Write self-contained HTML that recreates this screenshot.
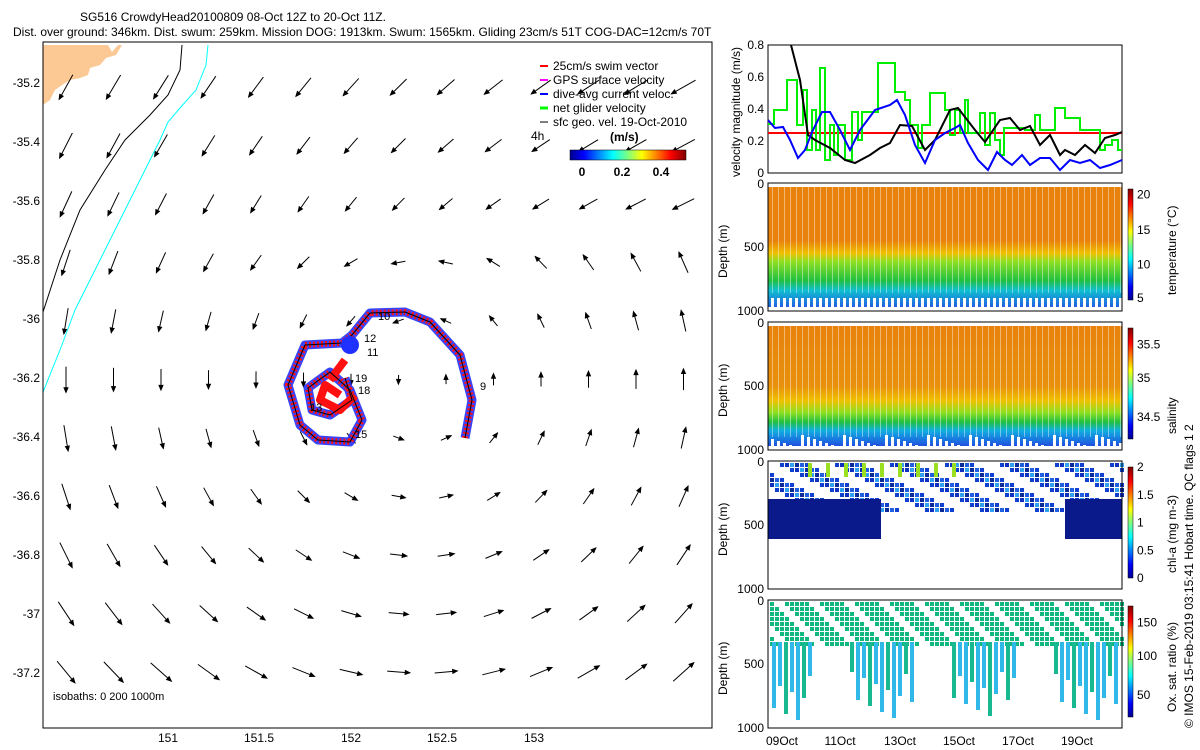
<!DOCTYPE html>
<html><head><meta charset="utf-8"><style>
html,body{margin:0;padding:0;background:#fff;width:1200px;height:750px;overflow:hidden}
svg{display:block;font-family:"Liberation Sans",sans-serif}
</style></head><body>
<svg id="s" width="1200" height="750" viewBox="0 0 1200 750" xmlns="http://www.w3.org/2000/svg">
<defs>
<linearGradient id="jet" x1="0" x2="1" y1="0" y2="0">
<stop offset="0" stop-color="#00008f"/><stop offset="0.12" stop-color="#0000ff"/><stop offset="0.37" stop-color="#00ffff"/><stop offset="0.5" stop-color="#7fff7f"/><stop offset="0.62" stop-color="#ffff00"/><stop offset="0.87" stop-color="#ff0000"/><stop offset="1" stop-color="#800000"/>
</linearGradient>
<linearGradient id="jetv" x1="0" x2="0" y1="1" y2="0">
<stop offset="0" stop-color="#00008f"/><stop offset="0.12" stop-color="#0000ff"/><stop offset="0.37" stop-color="#00ffff"/><stop offset="0.5" stop-color="#7fff7f"/><stop offset="0.62" stop-color="#ffff00"/><stop offset="0.87" stop-color="#ff0000"/><stop offset="1" stop-color="#800000"/>
</linearGradient>
<linearGradient id="tg" x1="0" x2="0" y1="0" y2="1">
<stop offset="0" stop-color="#e8820c"/><stop offset="0.45" stop-color="#e8820c"/><stop offset="0.55" stop-color="#f0c000"/><stop offset="0.62" stop-color="#90e020"/><stop offset="0.78" stop-color="#20c040"/><stop offset="0.86" stop-color="#10c0d0"/><stop offset="1" stop-color="#2060e0"/>
</linearGradient>
<linearGradient id="sg" x1="0" x2="0" y1="0" y2="1">
<stop offset="0" stop-color="#e8820c"/><stop offset="0.5" stop-color="#e8900c"/><stop offset="0.62" stop-color="#f0c000"/><stop offset="0.72" stop-color="#90e020"/><stop offset="0.8" stop-color="#20c040"/><stop offset="0.87" stop-color="#10b0e0"/><stop offset="1" stop-color="#2050e0"/>
</linearGradient>
</defs>
<g font-size="12" fill="#000">
<text x="80" y="21">SG516 CrowdyHead20100809 08-Oct 12Z to 20-Oct 11Z.</text>
<text x="13" y="36">Dist. over ground: 346km. Dist. swum: 259km. Mission DOG: 1913km. Swum: 1565km. Gliding 23cm/s 51T COG-DAC=12cm/s 70T</text>
</g>
<!-- map -->
<path d="M43,45 L108,45 L112,52 L118,45 L122,45 L116,55 L106,58 L100,65 L90,68 L88,75 L80,78 L70,80 L62,85 L55,90 L50,100 L43,105 Z" fill="#fcc994"/>
<path d="M182,45 L180,70 L168,95 L150,115 L125,140 L105,170 L80,210 L60,260 L43,312" fill="none" stroke="#000" stroke-width="1"/>
<path d="M208,45 L206,65 L196,90 L180,108 L168,122 L160,140 L150,160 L125,210 L100,260 L75,310 L60,350 L43,392" fill="none" stroke="#0ff" stroke-width="1"/>
<g id="arrows" stroke="#000" fill="#000" stroke-width="1"></g>
<g fill="none" stroke-linejoin="round">
<path id="trk" d="M465,438 L472,400 L460,355 L430,322 L405,312 L370,313 L352,335 L342,343 L305,345 L288,385 L300,425 L318,440 L350,442 L362,420 L350,390 L330,372 L308,388 L312,410 L330,415 L352,400 L345,378" stroke="#2030ff" stroke-width="9" opacity="0.9"/>
<path d="M465,438 L472,400 L460,355 L430,322 L405,312 L370,313 L352,335 L342,343 L305,345 L288,385 L300,425 L318,440 L350,442 L362,420 L350,390 L330,372 L308,388 L312,410 L330,415 L352,400 L345,378" stroke="#ff1010" stroke-width="6" stroke-dasharray="2 2"/>
<path d="M340,395 L325,385 L320,400 L340,410 L355,395 M330,380 L345,360" stroke="#ff1010" stroke-width="8"/>
<path d="M465,438 L472,400 L460,355 L430,322 L405,312 L370,313 L352,335 L342,343 L305,345 L288,385 L300,425 L318,440 L350,442 L362,420 L350,390 L330,372 L308,388 L312,410 L330,415 L352,400 L345,378" stroke="#000" stroke-width="1"/>
<circle cx="350" cy="345" r="9" fill="#2030ff"/>
</g>
<g font-size="11"><text x="378" y="320">10</text><text x="364" y="342">12</text><text x="367" y="356">11</text><text x="355" y="382">19</text><text x="358" y="394">18</text><text x="310" y="411">13</text><text x="355" y="438">15</text><text x="480" y="390">9</text></g>
<rect x="43" y="42" width="669" height="686" fill="none" stroke="#000"/>
<g font-size="12" text-anchor="end">
<text x="40" y="87">-35.2</text><text x="40" y="146">-35.4</text><text x="40" y="205">-35.6</text><text x="40" y="264">-35.8</text><text x="40" y="323">-36</text><text x="40" y="382">-36.2</text><text x="40" y="441">-36.4</text><text x="40" y="500">-36.6</text><text x="40" y="559">-36.8</text><text x="40" y="618">-37</text><text x="40" y="677">-37.2</text>
</g>
<g font-size="12" text-anchor="middle">
<text x="168" y="742">151</text><text x="259" y="742">151.5</text><text x="351" y="742">152</text><text x="442" y="742">152.5</text><text x="534" y="742">153</text>
</g>
<text x="53" y="700" font-size="11">isobaths: 0   200  1000m</text>
<!-- legend -->
<g font-size="12">
<line x1="540" y1="66" x2="548" y2="66" stroke="red" stroke-width="2"/><text x="553" y="70">25cm/s swim vector</text>
<line x1="540" y1="80" x2="548" y2="80" stroke="#f0f" stroke-width="2"/><text x="553" y="84">GPS surface velocity</text>
<line x1="540" y1="94" x2="548" y2="94" stroke="#00f" stroke-width="2"/><text x="553" y="98">dive-avg current veloc.</text>
<line x1="540" y1="108" x2="548" y2="108" stroke="#0f0" stroke-width="3"/><text x="553" y="112">net glider velocity</text>
<line x1="540" y1="122" x2="548" y2="122" stroke="#000" stroke-width="1"/><text x="553" y="126">sfc geo. vel. 19-Oct-2010</text>
<text x="531" y="140">4h</text>
<text x="610" y="141" font-weight="bold">(m/s)</text>
<rect x="570" y="150" width="116" height="10" fill="url(#jet)" stroke="#000" stroke-width="0.5"/>
<g font-weight="bold" text-anchor="middle"><text x="582" y="176">0</text><text x="622" y="176">0.2</text><text x="661" y="176">0.4</text></g>
</g>
<!-- panel1 -->
<g>
<rect x="768" y="45" width="354" height="128" fill="#fff" stroke="#000"/>
<path d="M768,133 L1122,133" stroke="#f00" stroke-width="2"/>
<path d="M768,124 L774,124 L774,110 L787,110 L787,80 L797,80 L797,125 L803,125 L803,90 L807,90 L807,150 L812,150 L812,110 L816,110 L816,150 L820,150 L820,68 L825,68 L825,160 L830,160 L830,125 L834,125 L834,155 L838,155 L838,125 L845,125 L845,160 L852,160 L852,112 L858,112 L858,140 L862,140 L862,112 L878,112 L878,63 L895,63 L895,92 L905,92 L905,100 L910,100 L910,125 L918,125 L918,148 L922,148 L922,125 L930,125 L930,93 L945,93 L945,110 L950,110 L950,135 L955,135 L955,110 L960,110 L960,133 L965,133 L965,100 L968,100 L968,133 L980,133 L980,113 L985,113 L985,145 L990,145 L990,113 L995,113 L995,140 L1000,140 L1000,155 L1004,155 L1004,128 L1025,128 L1025,130 L1035,130 L1035,115 L1040,115 L1040,130 L1055,130 L1055,108 L1065,108 L1065,118 L1080,118 L1080,130 L1100,130 L1100,150 L1105,150 L1105,145 L1112,145 L1112,140 L1118,140 L1118,150 L1122,150" fill="none" stroke="#00ee00" stroke-width="2"/>
<path d="M791,45 L800,80 L808,135 L815,140 L830,148 L845,160 L855,163 L870,155 L880,148 L890,143 L900,125 L912,126 L925,150 L935,140 L950,110 L958,108 L975,130 L985,142 L1000,120 L1010,118 L1020,130 L1030,126 L1040,145 L1050,135 L1060,155 L1065,150 L1075,155 L1085,145 L1095,153 L1105,138 L1115,135 L1122,132" fill="none" stroke="#000" stroke-width="2"/>
<path d="M768,120 L775,128 L783,127 L790,140 L798,158 L805,150 L812,132 L822,112 L830,112 L840,130 L850,150 L860,130 L875,110 L890,105 L897,100 L905,115 L915,145 L925,163 L935,140 L945,133 L955,128 L960,125 L968,143 L978,160 L988,170 L997,152 L1005,160 L1012,165 L1022,155 L1030,165 L1040,158 L1050,158 L1060,170 L1070,160 L1080,163 L1090,160 L1100,168 L1110,165 L1122,160" fill="none" stroke="#00f" stroke-width="2"/>
<g font-size="12" text-anchor="end"><text x="764" y="49">0.8</text><text x="764" y="81">0.6</text><text x="764" y="113">0.4</text><text x="764" y="145">0.2</text><text x="764" y="177">0</text></g>
<text transform="translate(740,177) rotate(-90)" font-size="12">velocity magnitude (m/s)</text>
</g>
<g id="panels"></g>
<g font-size="12" text-anchor="middle"><text x="782" y="745">09Oct</text><text x="840" y="745">11Oct</text><text x="900" y="745">13Oct</text><text x="959" y="745">15Oct</text><text x="1018" y="745">17Oct</text><text x="1077" y="745">19Oct</text></g>
<text transform="translate(1193,728) rotate(-90)" font-size="12">© IMOS 15-Feb-2019 03:15:41 Hobart time. QC flags 1  2</text>
</svg>
<script>
var NS="http://www.w3.org/2000/svg",s=document.getElementById('s');
function el(p,t,a){var e=document.createElementNS(NS,t);for(var k in a)e.setAttribute(k,a[k]);p.appendChild(e);return e;}
function tx(p,x,y,str,a){a=a||{};a.x=x;a.y=y;a['font-size']=a['font-size']||12;var e=el(p,'text',a);e.textContent=str;return e;}
var g=document.getElementById('arrows');
var cx=420,cy=380;
for(var i=0;i<14;i++)for(var j=0;j<12;j++){
 var x=66+i*47.5,y=87+j*58.5;if(y>725)continue;
 var dx=x-cx,dy=y-cy,r=Math.sqrt(dx*dx+dy*dy)+1;
 var m=Math.min(28,8+ r*0.05);
 var vx=dy/r,vy=-dx/r;
 if(j<3){vx=vx*0.4-0.35;vy=vy*0.5+0.7;}
 var n=Math.sqrt(vx*vx+vy*vy);vx/=n;vy/=n;
 var x2=x+vx*m*0.5,y2=y+vy*m*0.5,x1=x-vx*m*0.5,y1=y-vy*m*0.5;
 el(g,'line',{x1:x1,y1:y1,x2:x2,y2:y2});
 var a=Math.atan2(y2-y1,x2-x1),h=5;
 el(g,'path',{d:'M'+x2+','+y2+' L'+(x2-h*Math.cos(a-0.4))+','+(y2-h*Math.sin(a-0.4))+' L'+(x2-h*Math.cos(a+0.4))+','+(y2-h*Math.sin(a+0.4))+'Z'});
}
var P=document.getElementById('panels');
var X0=768,X1=1122;
function frame(y0,lab){
 el(P,'rect',{x:X0,y:y0,width:X1-X0,height:128,fill:'none',stroke:'#000'});
 tx(P,764,y0+5,'0',{'text-anchor':'end'});tx(P,764,y0+68,'500',{'text-anchor':'end'});tx(P,764,y0+132,'1000',{'text-anchor':'end'});
 tx(P,0,0,'Depth (m)',{transform:'translate(727,'+(y0+95)+') rotate(-90)'});
}
function cbar(y0,ticks,lab){
 el(P,'rect',{x:1128,y:y0+6,width:5,height:111,fill:'url(#jetv)',stroke:'#000','stroke-width':0.5});
 ticks.forEach(function(t){tx(P,1137,y0+6+111*(1-t[1])+4,t[0]);});
 tx(P,0,0,lab,{transform:'translate(1176,'+(y0+112)+') rotate(-90)'});
}
function stripes(y0,y1){for(var x=X0+4;x<X1;x+=6)el(P,'rect',{x:x,y:y0,width:0.7,height:y1-y0,fill:'#fff',opacity:0.6});}
// temperature
var y0=183;el(P,'rect',{x:X0,y:y0+4,width:354,height:120,fill:'url(#tg)'});
for(var x=X0+3;x<X1;x+=6)el(P,'rect',{x:x,y:y0+108+((x*7)%14),width:3,height:24,fill:'#fff'});
stripes(y0+4,y0+110);frame(y0);cbar(y0,[['20',0.95],['15',0.63],['10',0.32],['5',0.02]],'temperature (°C)');
// salinity
y0=322;el(P,'rect',{x:X0,y:y0+4,width:354,height:120,fill:'url(#sg)'});
for(var x=X0+3;x<X1;x+=6)el(P,'rect',{x:x,y:y0+112+((x*5)%14),width:3,height:22,fill:'#fff'});
stripes(y0+4,y0+115);frame(y0);cbar(y0,[['35.5',0.85],['35',0.55],['34.5',0.2]],'salinity');
// chl
y0=461;
var cols=['#1040d0','#2060e0','#0a2a9a','#30a0f0','#1030c0'];
for(var x=X0+2;x<X1;x+=5)for(var yy=y0+2;yy<y0+50;yy+=5){var k=(x*13+yy*7)%11;if(k<6)el(P,'rect',{x:x,y:yy,width:4,height:4,fill:cols[k%5]});}
for(var x=X0+40;x<X0+190;x+=18)el(P,'rect',{x:x,y:y0+2,width:4,height:14,fill:(x%3?'#9be020':'#30c0e0')});
el(P,'rect',{x:X0,y:y0+38,width:113,height:40,fill:'#0a1a8a'});
el(P,'rect',{x:X0+297,y:y0+38,width:57,height:40,fill:'#0a1a8a'});
frame(y0);cbar(y0,[['2',1],['1.5',0.75],['1',0.5],['0.5',0.25],['0',0]],'chl-a (mg m-3)');
// oxygen
y0=600;
for(var x=X0+2;x<X1;x+=5)for(var yy=y0+2;yy<y0+45;yy+=5){var k=(x*11+yy*3)%7;if(k<5)el(P,'rect',{x:x,y:yy,width:4,height:4,fill:'#10b880'});}
for(var x=X0+4;x<X1;x+=6){var k=(x*37)%17;if(k<11){var h=30+((x*13)%50);el(P,'rect',{x:x,y:y0+42,width:4,height:h,fill:(k%3?'#30b8e8':'#18b890')});}}
frame(y0);cbar(y0,[['150',0.85],['100',0.55],['50',0.2]],'Ox. sat. ratio (%)');
</script>
</body></html>
